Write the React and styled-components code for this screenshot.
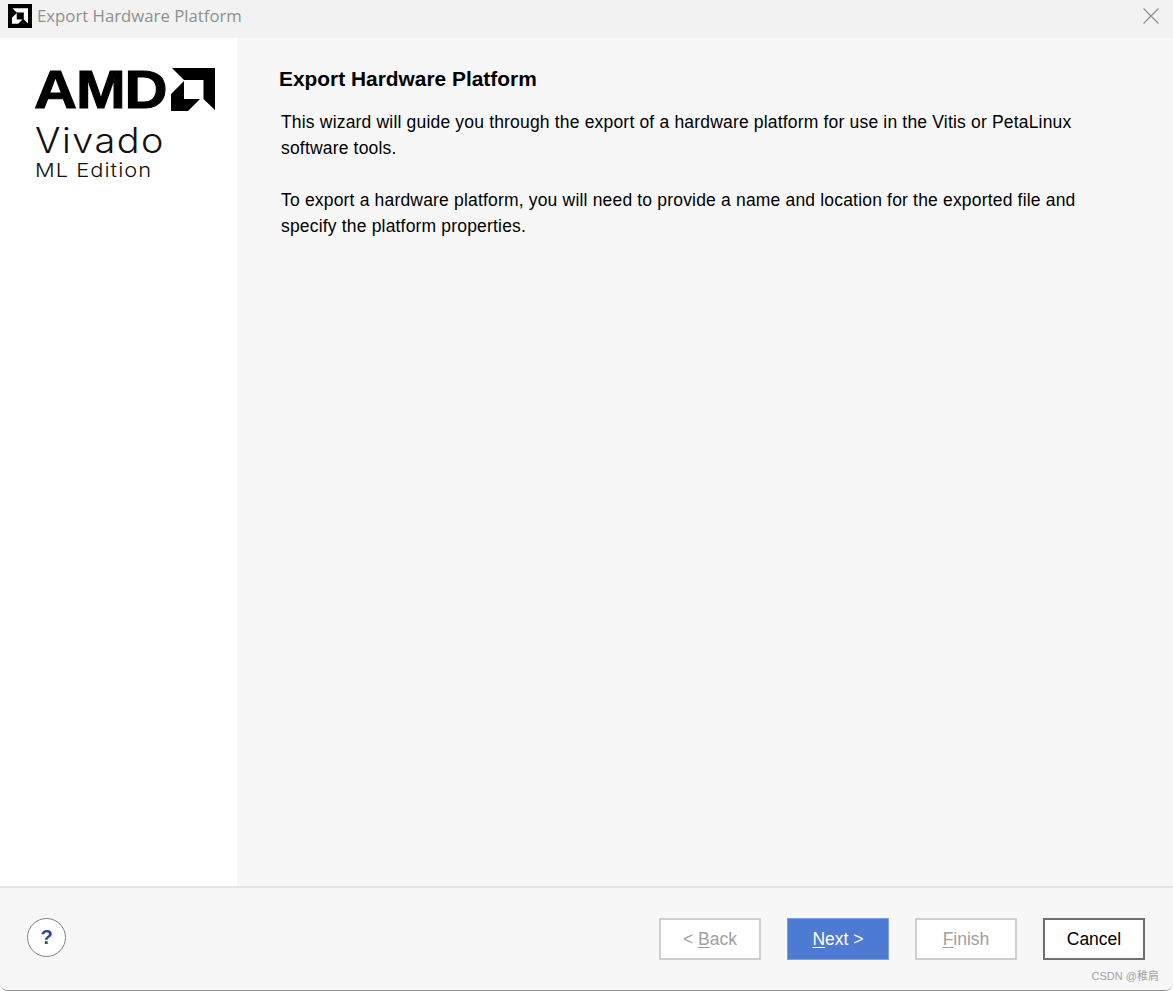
import React from "react";
import styled, { createGlobalStyle } from "styled-components";

const Global = createGlobalStyle`
  html, body { margin: 0; padding: 0; background: #fff; }
  #root { width: 1173px; height: 991px; overflow: hidden; }
`;
const Windowed = styled.div`
  width: 1173px; height: 991px; box-sizing: border-box;
  display: flex; flex-direction: column;
  font-family: "Liberation Sans", Arial, sans-serif;
  background: #f7f7f7;
  border-bottom: 1px solid #8f8f8f;
  border-radius: 0 0 8px 8px;
  overflow: hidden;
`;
const TitleBar = styled.div`
  height: 38px; flex: none; background: #f2f2f2;
  display: flex; align-items: center;
  padding: 0 14px 6px 8px; box-sizing: border-box;
`;
const TitleText = styled.span`
  margin: -2px 0 0 5px; font-family: "Open Sans", sans-serif;
  font-size: 16.75px; color: #8f8f8f; flex: 1; white-space: nowrap;
`;
const Body = styled.div`flex: 1; display: flex; min-height: 0;`;
const Sidebar = styled.aside`
  width: 237px; flex: none; background: #fff;
  padding: 30px 0 0 35px; box-sizing: border-box;
`;
const BrandRow = styled.div`display: flex; align-items: flex-start; height: 43px;`;
const AmdWord = styled.span`
  font-family: "Liberation Sans", sans-serif; font-weight: 700; font-size: 53px;
  line-height: 43px; height: 43px; color: #000; letter-spacing: -1px;
  display: inline-block; transform: scaleX(1.125); transform-origin: left center;
  width: 137px; margin-left: -1px; -webkit-text-stroke: 1px #000;
`;
const LogoMark = styled.svg`display: block; flex: none;`;
const Vivado = styled.div`
  font-family: "Inter", sans-serif; font-weight: 300; font-size: 35px;
  line-height: 26px; color: #111; letter-spacing: 1.4px; margin-top: 16px;
  transform: scaleX(1.08); transform-origin: left center;
`;
const Edition = styled.div`
  font-family: "Inter", sans-serif; font-weight: 300; font-size: 19px;
  line-height: 20px; color: #111; letter-spacing: .9px; margin-top: 8px;
  transform: scaleX(1.15); transform-origin: left center;
`;
const Main = styled.main`
  flex: 1; padding: 28px 60px 0 42px; box-sizing: border-box; color: #000;
`;
const Heading = styled.h1`
  margin: 0 0 17px; font-size: 20.9px; line-height: 26px; font-weight: 700;
`;
const Para = styled.p`
  margin: 0 0 26px 2px; font-size: 17.5px; line-height: 26px; width: 815px; letter-spacing: .18px;
`;
const Footer = styled.footer`
  height: 104px; flex: none; box-sizing: border-box;
  border-top: 2px solid #e6e6e6; background: #f7f7f7;
  display: flex; align-items: center; position: relative;
  padding: 0 28px 0 27px;
`;
const Help = styled.div`
  width: 39px; height: 39px; border-radius: 50%; box-sizing: border-box;
  border: 1px solid #808080; background: #fff; color: #2c4a8c;
  display: flex; align-items: center; justify-content: center;
  font-weight: 700; font-size: 20px; margin-top: -4px;
`;
const Buttons = styled.div`margin-left: auto; display: flex; gap: 26px; margin-top: -1px;`;
const Button = styled.button`
  width: 102px; height: 42px; box-sizing: border-box; padding: 1px 0 0;
  font-family: "Liberation Sans", sans-serif; font-size: 17.5px;
  background: ${p => p.$primary ? "#4d7ad2" : "#fff"};
  color: ${p => p.$primary ? "#fff" : p.$off ? "#a0a0a0" : "#000"};
  border: ${p => p.$primary ? "1px solid #7d9ee0" : p.$off ? "2px solid #cfcfcf" : "2px solid #6e6e6e"};
`;
const Key = styled.span`text-decoration: underline; text-underline-offset: 2px;`;
const Watermark = styled.span`
  position: absolute; right: 14px; bottom: 7px; font-size: 11px; color: #a3a3a3;
  font-family: "Liberation Sans", "Noto Sans CJK SC", sans-serif;
`;

const markPath = "M1 0H44V42L32.5 31V12H13ZM0 43V26L13 13V31H29L17 43Z";
const SmallIcon = styled.div`
  width: 24px; height: 24px; background: #000; flex: none;
  display: flex; align-items: center; justify-content: center;
`;
const CloseIcon = () => (
  <svg width="16" height="16" viewBox="0 0 16 16" style={{ display: "block" }}>
    <path d="M.5.5l15 15M15.5.5l-15 15" stroke="#8f8f8f" strokeWidth="1.2" fill="none" />
  </svg>
);

export default function App() {
  return (
    <>
      <Global />
      <Windowed>
        <TitleBar>
          <SmallIcon>
            <LogoMark width="16" height="16" viewBox="0 0 44 43"><path fill="#fff" d={markPath} /></LogoMark>
          </SmallIcon>
          <TitleText>Export Hardware Platform</TitleText>
          <CloseIcon />
        </TitleBar>
        <Body>
          <Sidebar>
            <BrandRow>
              <AmdWord>AMD</AmdWord>
              <LogoMark width="44" height="43" viewBox="0 0 44 43"><path fill="#000" d={markPath} /></LogoMark>
            </BrandRow>
            <Vivado>Vivado</Vivado>
            <Edition>ML Edition</Edition>
          </Sidebar>
          <Main>
            <Heading>Export Hardware Platform</Heading>
            <Para>This wizard will guide you through the export of a hardware platform for use in the Vitis or PetaLinux software tools.</Para>
            <Para>To export a hardware platform, you will need to provide a name and location for the exported file and specify the platform properties.</Para>
          </Main>
        </Body>
        <Footer>
          <Help>?</Help>
          <Buttons>
            <Button $off>&lt; <Key>B</Key>ack</Button>
            <Button $primary><Key>N</Key>ext &gt;</Button>
            <Button $off><Key>F</Key>inish</Button>
            <Button>Cancel</Button>
          </Buttons>
          <Watermark>CSDN @稚肩</Watermark>
        </Footer>
      </Windowed>
    </>
  );
}
